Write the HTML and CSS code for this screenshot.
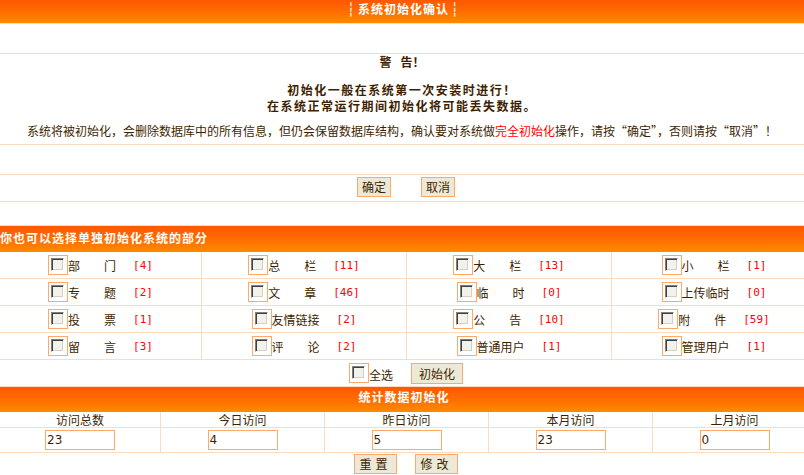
FILE: index.html
```html
<!DOCTYPE html>
<html lang="zh-CN">
<head>
<meta charset="utf-8">
<title>系统初始化确认</title>
<link rel="stylesheet" href="styles.css">
</head>
<body>
<div class="page">
  <div class="bar bar-top"><span class="dash">┆</span>系统初始化确认<span class="dash">┆</span></div>
  <div class="row empty"></div>
  <div class="row warn">
    <p class="w-title">警<span class="sp"></span>告！</p>
    <p class="w-bold">初始化一般在系统第一次安装时进行！</p>
    <p class="w-bold w-bold2">在系统正常运行期间初始化将可能丢失数据。</p>
    <p class="w-text">系统将被初始化，会删除数据库中的所有信息，但仍会保留数据库结构，确认要对系统做<span class="red">完全初始化</span>操作，请按“确定”，否则请按“取消”！</p>
  </div>
  <div class="row empty"></div>
  <div class="row btns">
    <button class="btn b2">确定</button>
    <button class="btn b2">取消</button>
  </div>
  <div class="spacer"></div>
  <div class="bar bar-sec">你也可以选择单独初始化系统的部分</div>
  <div class="grid">
    <div class="cell"><span class="cb"><span class="cbi"></span></span><span class="lbl">部门</span><span class="num">[4]</span></div>
    <div class="cell"><span class="cb"><span class="cbi"></span></span><span class="lbl">总栏</span><span class="num">[11]</span></div>
    <div class="cell"><span class="cb"><span class="cbi"></span></span><span class="lbl">大栏</span><span class="num">[13]</span></div>
    <div class="cell"><span class="cb"><span class="cbi"></span></span><span class="lbl">小栏</span><span class="num">[1]</span></div>
    <div class="cell"><span class="cb"><span class="cbi"></span></span><span class="lbl">专题</span><span class="num">[2]</span></div>
    <div class="cell"><span class="cb"><span class="cbi"></span></span><span class="lbl">文章</span><span class="num">[46]</span></div>
    <div class="cell"><span class="cb"><span class="cbi"></span></span><span class="lbl">临时</span><span class="num">[0]</span></div>
    <div class="cell"><span class="cb"><span class="cbi"></span></span><span class="lbl">上传临时</span><span class="num">[0]</span></div>
    <div class="cell"><span class="cb"><span class="cbi"></span></span><span class="lbl">投票</span><span class="num">[1]</span></div>
    <div class="cell"><span class="cb"><span class="cbi"></span></span><span class="lbl">友情链接</span><span class="num">[2]</span></div>
    <div class="cell"><span class="cb"><span class="cbi"></span></span><span class="lbl">公告</span><span class="num">[10]</span></div>
    <div class="cell"><span class="cb"><span class="cbi"></span></span><span class="lbl">附件</span><span class="num">[59]</span></div>
    <div class="cell"><span class="cb"><span class="cbi"></span></span><span class="lbl">留言</span><span class="num">[3]</span></div>
    <div class="cell"><span class="cb"><span class="cbi"></span></span><span class="lbl">评论</span><span class="num">[2]</span></div>
    <div class="cell"><span class="cb"><span class="cbi"></span></span><span class="lbl">普通用户</span><span class="num">[1]</span></div>
    <div class="cell"><span class="cb"><span class="cbi"></span></span><span class="lbl">管理用户</span><span class="num">[1]</span></div>
  </div>
  <div class="row selall">
    <span class="cb"><span class="cbi"></span></span><span class="sel-lbl">全选</span>
    <button class="btn b3">初始化</button>
  </div>
  <div class="bar bar-stat">统计数据初始化</div>
  <div class="stats">
    <div class="sh">访问总数</div>
    <div class="sh">今日访问</div>
    <div class="sh">昨日访问</div>
    <div class="sh">本月访问</div>
    <div class="sh">上月访问</div>
    <div class="si"><input class="inp" type="text" value="23"></div>
    <div class="si"><input class="inp" type="text" value="4"></div>
    <div class="si"><input class="inp" type="text" value="5"></div>
    <div class="si"><input class="inp" type="text" value="23"></div>
    <div class="si"><input class="inp" type="text" value="0"></div>
  </div>
  <div class="sbtns">
    <button class="btn bs">重置</button>
    <button class="btn bs">修改</button>
  </div>
</div>
</body>
</html>
```

FILE: styles.css
```css
* { box-sizing: border-box; }
html, body { margin: 0; padding: 0; overflow: hidden; background: #fff; }
body {
  font-family: "Noto Sans CJK SC", "Liberation Sans", sans-serif;
  font-size: 12px;
  line-height: 14px;
  color: #3f1f00;
}
.page { width: 804px; }

.bar {
  background: linear-gradient(#ff5800, #ff6a00 45%, #ff8a00);
  color: #fff;
  font-weight: bold;
  letter-spacing: 1px;
}
.bar-top {
  height: 24px;
  line-height: 18px;
  text-align: center;
  padding-left: 3px;
  border-bottom: 1px solid #ffdcbc;
}
.dash {
  font-family: "DejaVu Sans Mono", monospace;
  font-weight: bold;
  font-size: 13px;
  padding: 0 2px;
}
.row { border-bottom: 1px solid #fcdcc0; }
.empty { height: 30px; }

.warn { height: 91px; text-align: center; }
.warn p { margin: 0; }
.w-title { line-height: 16px; font-weight: bold; }
.sp { display: inline-block; width: 9px; }
.warn .w-bold { margin-top: 12px; font-size: 12px; line-height: 16px; font-weight: bold; letter-spacing: 1.5px; }
.warn .w-bold2 { margin-top: 0; }
.warn .w-text { margin-top: 10px; line-height: 14px; }
.red { color: #ff0000; }

.btns {
  height: 27px;
  padding: 2px 0 0 8px;
  display: flex;
  justify-content: center;
  align-items: flex-start;
  gap: 30px;
}
.btn {
  font-family: inherit;
  font-size: 12px;
  color: #3f1f00;
  background: #ece9d8;
  border: 1px solid #ffa868;
  padding: 0;
  height: 20px;
  line-height: 18px;
  margin: 0;
}
.b2 { width: 34px; }
.b3 { width: 52px; height: 21px; line-height: 19px; }
.bs { width: 43px; letter-spacing: 4px; }

.spacer { height: 23px; }
.bar-sec {
  height: 27px;
  border-top: 1px solid #ffdcbc;
  line-height: 24px;
}

.grid {
  width: 816px;
  display: grid;
  grid-template-columns: 201px 204px 204px 204px;
  grid-auto-rows: 26px;
  gap: 1px;
  background: #fcdcc0;
  border-bottom: 1px solid #fcdcc0;
}
.cell {
  background: #fff;
  display: flex;
  align-items: center;
  justify-content: center;
}
.cb {
  flex: none;
  display: inline-block;
  width: 20px;
  height: 20px;
  border: 1px solid #ffa868;
  padding: 2px;
}
.cbi {
  display: block;
  width: 13px;
  height: 13px;
  border: 1px solid;
  border-color: #808080 #ffffff #ffffff #808080;
  box-shadow: inset 1px 1px #404040, inset -1px -1px #d4d0c8;
  background: #f3f2ea;
}
.lbl {
  width: 48px;
  text-align: justify;
  text-align-last: justify;
  line-height: 14px;
  margin-top: 2px;
}
.num {
  margin-left: 17px;
  color: #ff0000;
  font-family: "DejaVu Sans Mono", "Liberation Mono", monospace;
  font-size: 11px;
  line-height: 14px;
  margin-top: 2px;
}

.selall {
  height: 27px;
  padding-left: 8px;
  display: flex;
  justify-content: center;
  align-items: center;
  border-bottom-color: #ffdcbc;
}
.sel-lbl { margin-top: 3px; margin-right: 18px; }

.bar-stat {
  height: 25px;
  line-height: 20px;
  text-align: center;
  padding-left: 4px;
}

.stats {
  width: 816px;
  display: grid;
  grid-template-columns: 160px repeat(4, 163px);
  grid-template-rows: 15px 24px;
  gap: 1px;
  background: #fcdcc0;
  border-bottom: 1px solid #fcdcc0;
}
.sh { background: #fff; text-align: center; line-height: 15px; }
.si { background: #fff; display: flex; align-items: center; justify-content: center; }
.inp {
  width: 70px;
  height: 20px;
  border: 1px solid #ffa868;
  padding: 0 1px;
  margin: 0;
  font-family: "DejaVu Sans", sans-serif;
  font-size: 12px;
  color: #3f1f00;
  background: #fff;
  outline: none;
}

.sbtns {
  display: flex;
  justify-content: center;
  gap: 18px;
  padding: 1px 0 0 8px;
}
```
